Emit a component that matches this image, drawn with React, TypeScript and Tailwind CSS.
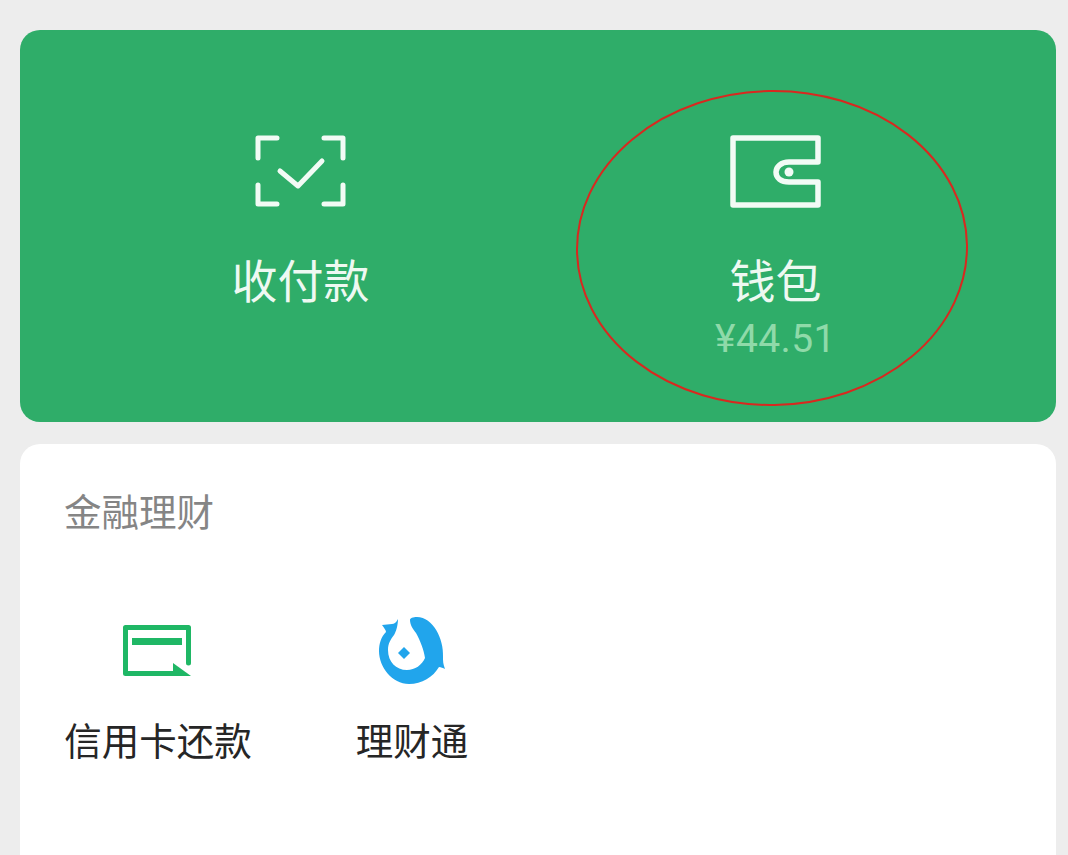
const cjk = { fontFamily: '"Noto Sans CJK SC", "Noto Sans", sans-serif' };

function ScanIcon() {
  return (
    <svg width="92" height="74" viewBox="0 0 92 74" fill="none" stroke="#f2fbf5" strokeWidth="5" strokeLinecap="round" strokeLinejoin="round">
      <path d="M22 3H3V23" />
      <path d="M69 3H88V23" />
      <path d="M3 50V69H22" />
      <path d="M88 50V69H69" />
      <path d="M25 36L43 51L67 26" />
    </svg>
  );
}

function WalletIcon() {
  return (
    <svg width="92" height="74" viewBox="0 0 92 74" fill="none" stroke="#f2fbf5" strokeWidth="5.5" strokeLinejoin="round">
      <path d="M3 3H88V27H59C51 27 46 32 46 37C46 43 51 47 59 47H88V70H3Z" />
      <circle cx="59" cy="37" r="4.5" fill="#f2fbf5" stroke="none" />
    </svg>
  );
}

function CardIcon() {
  return (
    <svg width="72" height="56" viewBox="0 0 72 56">
      <path d="M66.5 39V3.5H3.5V49.5H52" fill="none" stroke="#1fb765" strokeWidth="5" strokeLinejoin="round" strokeLinecap="round" />
      <rect x="10" y="14" width="50" height="7" fill="#1fb765" />
      <path d="M51 39L69 52H51Z" fill="#1fb765" />
    </svg>
  );
}

function FundIcon() {
  return (
    <svg width="70" height="70" viewBox="0 0 70 70">
      <path
        d="M21 2C19 6 17 7 15 7L5 8C7 11 9 13 9 15C4 20 2 27 2 34C2 50 15 67 32 67C45 67 56 60 62 50C64 50 66 51 68 52C66 47 66 44 66 40C67 22 56 0 40 0C36 0 33 1 33 3C33 8 36 12 39 16C43 23 47 33 48 41C45 48 38 53 30 53C19 53 11 45 11 33C11 26 14 22 17 18C19 15 21 8 21 2Z"
        fill="#21a5ec"
      />
      <path d="M27 30L33 36L27 42L21 36Z" fill="#21a5ec" />
    </svg>
  );
}

export default function App() {
  return (
    <div className="relative h-[855px] w-[1068px] overflow-hidden bg-[#ededed] pt-[30px] pl-[20px] pr-[12px]" style={cjk}>
      <div className="grid h-[392px] grid-cols-2 rounded-[20px] bg-[#2fad69] px-[43px] pt-[105px]">
        <div className="flex flex-col items-center">
          <ScanIcon />
          <div className="mt-[37px] text-[46px] leading-[64px] text-[#eef9f2]">收付款</div>
        </div>
        <div className="flex flex-col items-center">
          <WalletIcon />
          <div className="mt-[37px] text-[46px] leading-[64px] text-[#eef9f2]">钱包</div>
          <div className="mt-[7px] text-[39px] leading-[44px] tracking-[0.4px] text-[#8fdaa9]" style={{ fontFamily: 'Roboto, sans-serif' }}>
            ¥44.51
          </div>
        </div>
      </div>

      <div className="mt-[22px] h-[430px] rounded-[20px] bg-white pl-[44px] pt-[41px]">
        <div className="text-[37.5px] leading-[50px] text-[#858585]">金融理财</div>
        <div className="mt-[89px] flex gap-[104px]">
          <div className="flex w-[188px] flex-col items-center">
            <CardIcon />
            <div className="mt-[32px] whitespace-nowrap text-[37.5px] leading-[54px] text-[#262626]">信用卡还款</div>
          </div>
          <div className="flex w-[112px] flex-col items-center">
            <div className="-mt-[7px]">
              <FundIcon />
            </div>
            <div className="mt-[25px] whitespace-nowrap text-[37.5px] leading-[54px] text-[#262626]">理财通</div>
          </div>
        </div>
      </div>

      <svg className="pointer-events-none absolute left-[570px] top-[85px]" width="404" height="326" viewBox="0 0 404 326" fill="none">
        <ellipse cx="202" cy="163" rx="195" ry="157" stroke="#d9281f" strokeWidth="2" transform="rotate(-1 202 163)" />
      </svg>
    </div>
  );
}
